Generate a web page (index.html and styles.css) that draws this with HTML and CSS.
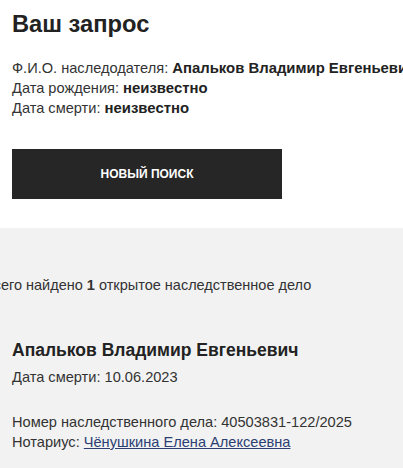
FILE: index.html
```html
<!DOCTYPE html>
<html lang="ru">
<head>
<meta charset="utf-8">
<title>Ваш запрос</title>
<link rel="stylesheet" href="styles.css">
</head>
<body>
<section class="query">
  <h1 class="query-title">Ваш запрос</h1>
  <div class="query-info">
    <div class="line">Ф.И.О. наследодателя: <b>Апальков Владимир Евгеньевич</b></div>
    <div class="line">Дата рождения: <b>неизвестно</b></div>
    <div class="line">Дата смерти: <b>неизвестно</b></div>
  </div>
  <button class="btn-search" type="button">НОВЫЙ ПОИСК</button>
</section>
<section class="results">
  <div class="results-count">Всего найдено <b>1</b> открытое наследственное дело</div>
  <div class="case">
    <h2 class="case-name">Апальков Владимир Евгеньевич</h2>
    <div class="line">Дата смерти: 10.06.2023</div>
    <div class="case-details">
      <div class="line">Номер наследственного дела: 40503831-122/2025</div>
      <div class="line">Нотариус: <a class="notary" href="#">Чёнушкина Елена Алексеевна</a></div>
    </div>
  </div>
</section>
</body>
</html>
```
FILE: styles.css
```css
html, body {
  margin: 0;
  padding: 0;
}
body {
  width: 403px;
  height: 468px;
  overflow: hidden;
  background: #fff;
  font-family: "Liberation Sans", Arial, sans-serif;
  color: #333;
  font-size: 14.6px;
}
.line {
  line-height: 20px;
  white-space: nowrap;
}
.line b {
  font-size: 1.02em;
  color: #222;
}
.query {
  padding: 10px 12px 29px;
}
.query-title {
  margin: 0;
  font-size: 23.7px;
  line-height: 28px;
  font-weight: bold;
  color: #222;
}
.query-info {
  margin-top: 20px;
}
.btn-search {
  display: flex;
  align-items: center;
  justify-content: center;
  margin-top: 31px;
  width: 270px;
  height: 50px;
  border: 0;
  padding: 0;
  background: #262626;
  color: #fff;
  font-family: inherit;
  font-size: 12px;
  font-weight: bold;
}
.results {
  background: #f2f2f2;
  padding: 47px 12px 0;
  height: 193px;
}
.results-count {
  margin-left: -28px;
  font-size: 14.5px;
  line-height: 20px;
  white-space: nowrap;
}
.case {
  margin-top: 44px;
}
.case-name {
  margin: 0 0 6px;
  font-size: 17.5px;
  line-height: 22px;
  font-weight: bold;
  color: #222;
}
.case-details {
  margin-top: 25px;
}
.notary {
  color: #2b3f73;
  text-decoration: underline;
}
```
